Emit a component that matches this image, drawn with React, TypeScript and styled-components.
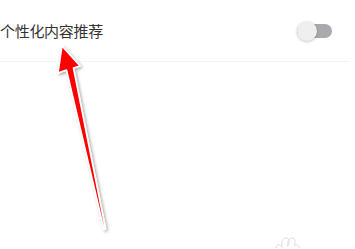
import React from "react";
import styled, { createGlobalStyle } from "styled-components";

const GlobalStyle = createGlobalStyle`
  html, body {
    margin: 0;
    padding: 0;
    background: #ffffff;
  }
  body {
    font-family: "Noto Sans CJK SC", "Noto Sans", sans-serif;
  }
`;

const Page = styled.div`
  position: relative;
  width: 355px;
  height: 249px;
  overflow: hidden;
  background: #ffffff;
`;

const SettingRow = styled.div`
  display: flex;
  align-items: center;
  justify-content: space-between;
  height: 61px;
  padding-right: 18px;
  margin-right: 5px;
  border-bottom: 1px solid #f3f3f3;
`;

const Label = styled.span`
  font-size: 15px;
  color: #333333;
  letter-spacing: -0.3px;
  margin-left: 0;
`;

const Track = styled.div<{ $on: boolean }>`
  position: relative;
  width: 35px;
  height: 14px;
  border-radius: 7px;
  background: ${(p) => (p.$on ? "#f04142" : "#a9a9ae")};
`;

const Knob = styled.div<{ $on: boolean }>`
  position: absolute;
  top: -3px;
  left: ${(p) => (p.$on ? "15px" : "0")};
  width: 20px;
  height: 20px;
  border-radius: 50%;
  background: #efeff0;
  box-shadow: 0 1px 3px rgba(0, 0, 0, 0.22);
`;

const Arrow = styled.svg`
  position: absolute;
  left: 0;
  top: 0;
  pointer-events: none;
`;

const Watermark = styled.svg`
  position: absolute;
  left: 274px;
  top: 234px;
`;

const Switch: React.FC<{ on: boolean }> = ({ on }) => (
  <Track $on={on}>
    <Knob $on={on} />
  </Track>
);

export default function App() {
  return (
    <>
      <GlobalStyle />
      <Page>
        <SettingRow>
          <Label>个性化内容推荐</Label>
          <Switch on={false} />
        </SettingRow>
        <Arrow width="355" height="249" viewBox="0 0 355 249">
          <defs>
            <filter id="sh" x="-50%" y="-10%" width="200%" height="120%">
              <feDropShadow dx="1.5" dy="1.5" stdDeviation="1.5" floodColor="#000" floodOpacity="0.35" />
            </filter>
          </defs>
          <path
            d="M62 46 L80 66 L73.5 68 L105.5 229 L104 229.5 L66.5 70 L58 73 Z"
            fill="#ff0000"
            stroke="#ffffff"
            strokeWidth="1.6"
            strokeLinejoin="round"
            filter="url(#sh)"
          />
        </Arrow>
        <Watermark width="32" height="15" viewBox="0 0 32 15">
          <g fill="none" stroke="#dddddd" strokeWidth="1">
            <path d="M2 14 C2 11 5 10 7 12" />
            <path d="M8 14 C7 8 9 4 12 4 C15 4 16 8 14 11" />
            <path d="M14 13 C13 8 15 4 18 4 C21 4 22 8 20 11" />
            <path d="M20 12 C22 10 25 11 26 14" />
          </g>
        </Watermark>
      </Page>
    </>
  );
}
